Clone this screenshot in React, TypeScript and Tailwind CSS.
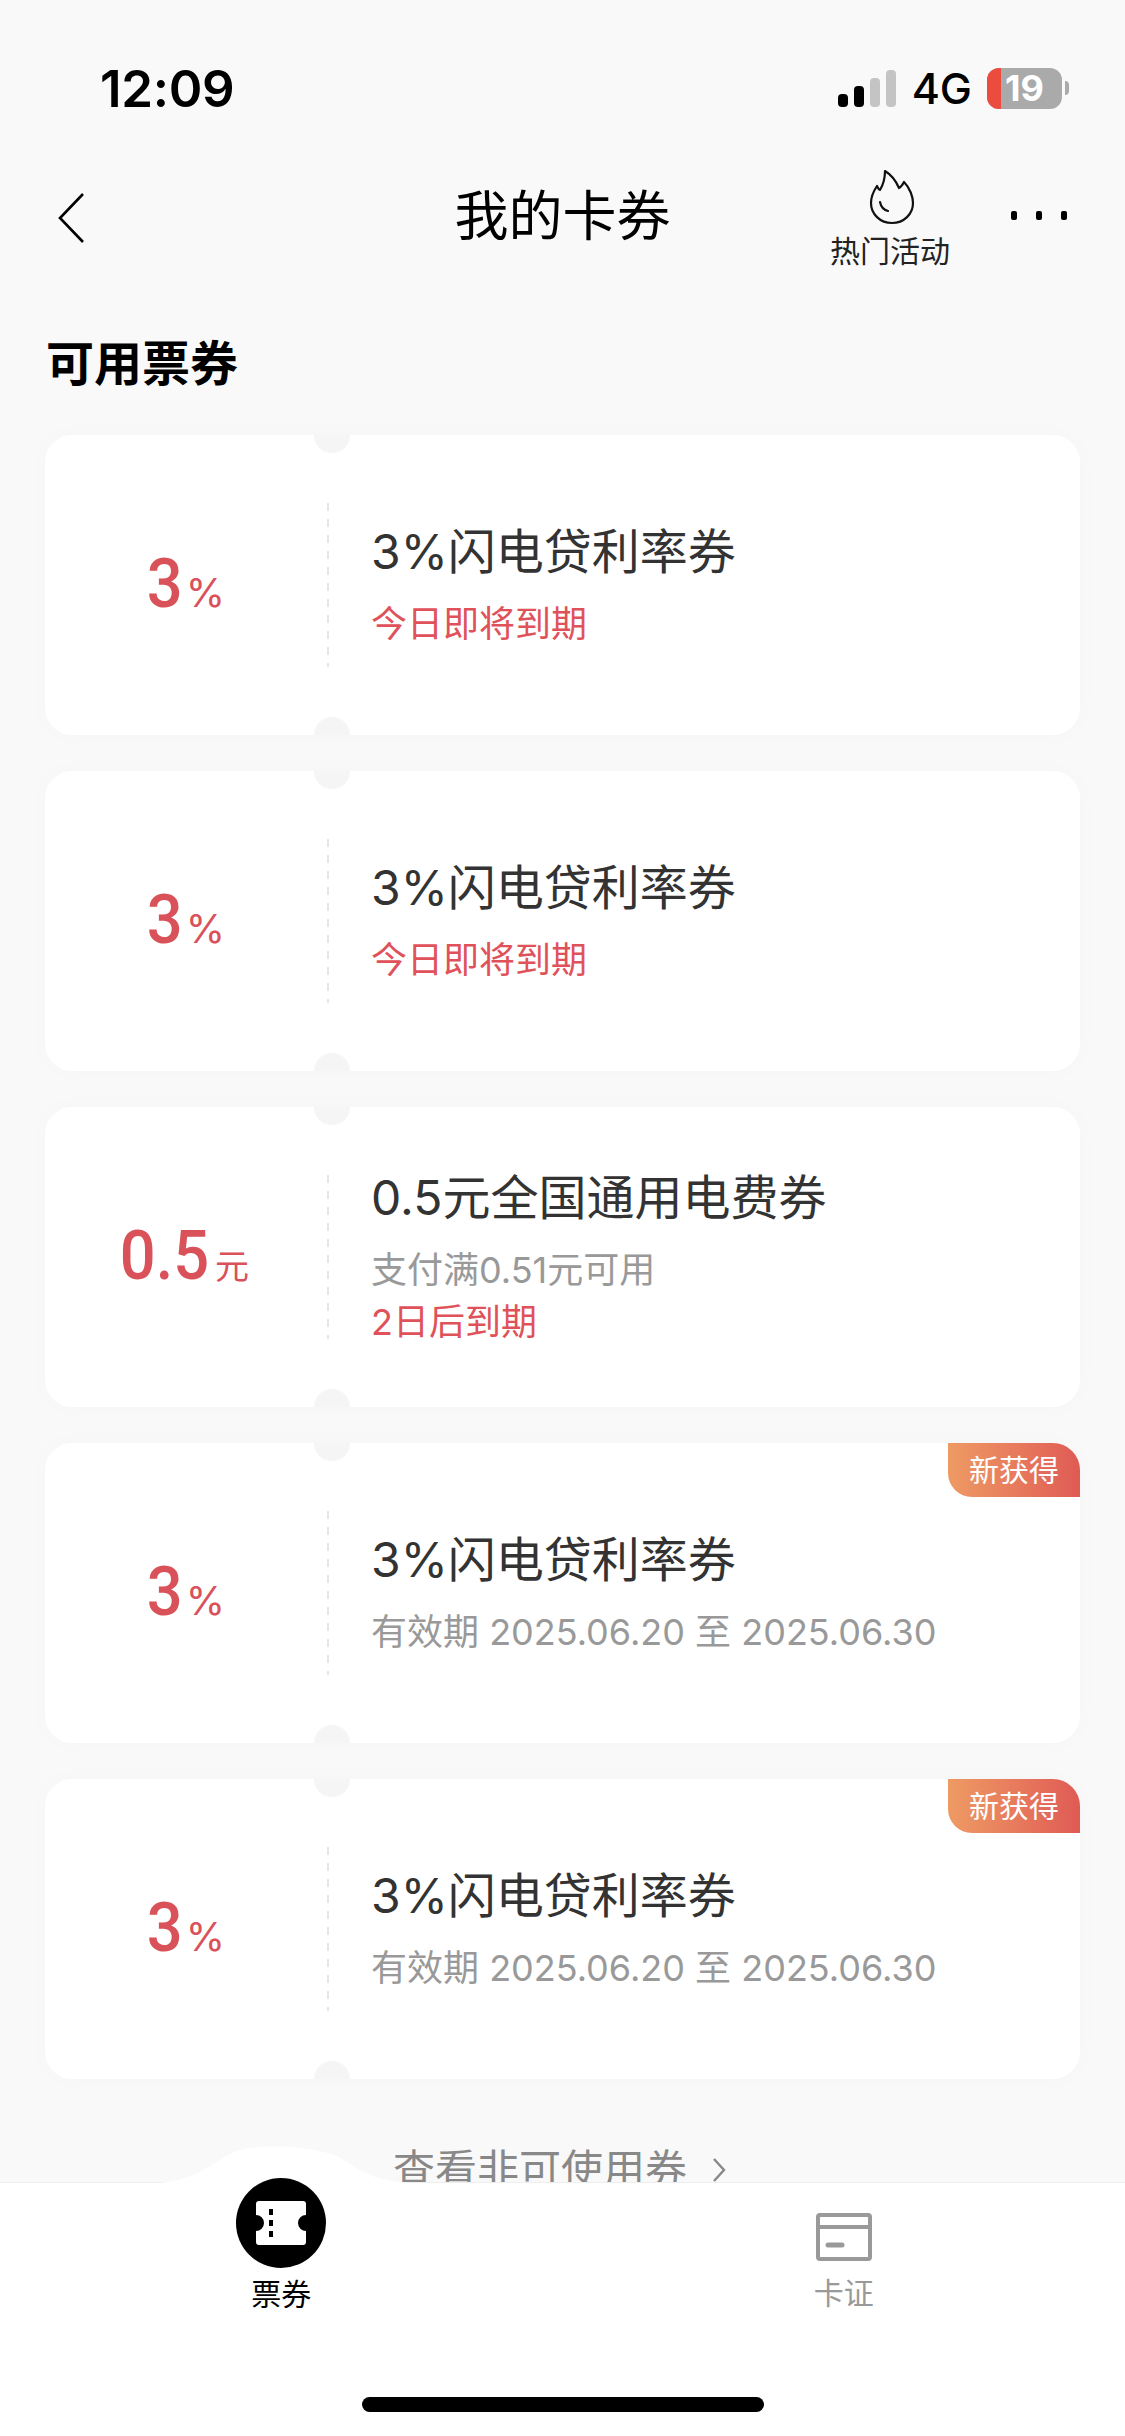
const FONT = "font-['Inter','Noto_Sans_CJK_SC',sans-serif]";

type Coupon = { value: string; unit: string; title: string; lines: { text: string; red?: boolean }[]; isNew?: boolean };

const coupons: Coupon[] = [
  { value: "3", unit: "%", title: "3%闪电贷利率券", lines: [{ text: "今日即将到期", red: true }] },
  { value: "3", unit: "%", title: "3%闪电贷利率券", lines: [{ text: "今日即将到期", red: true }] },
  { value: "0.5", unit: "元", title: "0.5元全国通用电费券", lines: [{ text: "支付满0.51元可用" }, { text: "2日后到期", red: true }] },
  { value: "3", unit: "%", title: "3%闪电贷利率券", lines: [{ text: "有效期 2025.06.20 至 2025.06.30" }], isNew: true },
  { value: "3", unit: "%", title: "3%闪电贷利率券", lines: [{ text: "有效期 2025.06.20 至 2025.06.30" }], isNew: true },
];

function CouponCard({ c }: { c: Coupon }) {
  const isPercent = c.unit === "%";
  return (
    <div className="relative flex h-[300px] overflow-hidden rounded-[27px] bg-white shadow-[0_0_24px_rgba(0,0,0,0.02)]">
      <div className="absolute left-[269px] top-[-18px] h-[36px] w-[36px] rounded-full bg-[#f5f5f5]" />
      <div className="absolute bottom-[-18px] left-[269px] h-[36px] w-[36px] rounded-full bg-[#f5f5f5]" />
      <div className={`flex w-[282px] items-baseline justify-center pt-[116px] ${isPercent ? "pr-[3px]" : "pr-[10px]"}`}>
        <span className="origin-right scale-x-[0.93] font-['Roboto'] text-[68px] leading-[66px] font-medium text-[#d9525a]">{c.value}</span>
        <span className={`leading-[34px] text-[#d9525a] ${isPercent ? "ml-[3px] text-[40px]" : "ml-[6px] text-[34px]"}`}>{c.unit}</span>
      </div>
      <div className="my-[68px] w-[2px] bg-[repeating-linear-gradient(to_bottom,#e6e6e6_0,#e6e6e6_8px,transparent_8px,transparent_16px)]" />
      <div className="flex flex-1 flex-col justify-center pb-[3px] pl-[42px]">
        <div className="mb-[12px] text-[48px] leading-[68px] text-[#333333]">{c.title}</div>
        {c.lines.map((l, i) => (
          <div key={i} className={`text-[36px] leading-[52px] ${l.red ? "text-[#e0525a]" : "text-[#999999]"}`}>
            {l.text}
          </div>
        ))}
      </div>
      {c.isNew && (
        <div className="absolute right-0 top-0 flex h-[54px] w-[132px] items-center justify-center rounded-bl-[24px] bg-gradient-to-r from-[#ee9a64] to-[#df5a55] text-[30px] leading-none text-white">
          新获得
        </div>
      )}
    </div>
  );
}

export default function App() {
  return (
    <div className={`${FONT} flex h-[2436px] w-[1125px] flex-col overflow-hidden bg-[#f9f9f9]`}>
      <main className="relative min-h-0 flex-1 overflow-hidden">
        {/* status bar */}
        <div className="flex h-[130px] items-center justify-between pt-[46px] pr-[56px] pl-[100px]">
          <span className="text-[51px] leading-none font-semibold tracking-[-0.3px] text-black">12:09</span>
          <div className="flex items-center">
            <div className="flex items-end gap-[6px]">
              <div className="h-[13px] w-[10px] rounded-[4px] bg-black" />
              <div className="h-[21px] w-[10px] rounded-[4px] bg-black" />
              <div className="h-[29px] w-[10px] rounded-[4px] bg-[#c4c4c4]" />
              <div className="h-[37px] w-[10px] rounded-[4px] bg-[#c4c4c4]" />
            </div>
            <span className="ml-[16px] text-[43px] leading-none font-medium text-black">4G</span>
            <div className="relative ml-[15px] flex h-[41px] w-[75px] items-center justify-center rounded-[12px] bg-[#aaaaaa]">
              <div className="absolute top-0 bottom-0 left-0 w-[14px] rounded-l-[12px] bg-[#ec4c3e]" />
              <span className="relative text-[36px] leading-[41px] font-bold text-white">19</span>
            </div>
            <div className="ml-[3px] h-[14px] w-[4px] rounded-r-full bg-[#aaaaaa]" />
          </div>
        </div>

        {/* nav */}
        <div className="relative flex h-[174px] items-center justify-center">
          <svg className="absolute top-[62px] left-[57px]" width="30" height="52" viewBox="0 0 30 52" fill="none">
            <path d="M26 2 3 26l23 24" stroke="#000" strokeWidth="2.6" />
          </svg>
          <span className="text-[54px] leading-none text-black">我的卡券</span>
          <div className="absolute top-[39px] left-[820px] flex w-[140px] flex-col items-center">
            <svg className="ml-[3px]" width="46" height="56" viewBox="0 0 46 56" fill="none" stroke="#111" strokeWidth="2.2" strokeLinejoin="round" strokeLinecap="round">
              <path d="M16 2c5 3 11 10 14 17 2-1 4-4 5-6 6 6 9 15 9 21 0 11-9 20-21 20S2 45 2 34c0-6 2-11 6-17 1 2 2 4 3 4 3-5 5-12 5-19Z" />
              <path d="M11 33c1 5 4 8 8 9" />
            </svg>
            <span className="mt-[8px] text-[30px] leading-[36px] text-[#222222]">热门活动</span>
          </div>
          <div className="absolute top-[81px] left-[1011px] flex gap-[19px]">
            <div className="h-[9px] w-[6px] rounded-[2px] bg-black" />
            <div className="h-[9px] w-[6px] rounded-[2px] bg-black" />
            <div className="h-[9px] w-[6px] rounded-[2px] bg-black" />
          </div>
        </div>

        {/* list */}
        <h2 className="mb-[13px] h-[118px] pl-[46px] text-[48px] leading-[120px] font-semibold text-black">可用票券</h2>
        <div className="mx-[45px] flex flex-col gap-[36px]">
          {coupons.map((c, i) => (
            <CouponCard key={i} c={c} />
          ))}
        </div>
        <div className="mt-[66px] flex items-center justify-center pr-[6px] text-[42px] leading-[50px] text-[#888888]">
          <span>查看非可使用券</span>
          <svg className="ml-[25px]" width="14" height="26" viewBox="0 0 14 26" fill="none">
            <path d="M2 2l10 11L2 24" stroke="#888" strokeWidth="2.4" />
          </svg>
        </div>
      </main>

      {/* tab bar */}
      <nav className="relative h-[254px] shrink-0 border-t border-[#eeeeee] bg-white">
        <svg className="absolute top-[-37px] left-[160px]" width="250" height="38" viewBox="0 0 250 38" fill="none">
          <path d="M0 38V37C15 36 28 31 40 26 55 18 68 6 85 3 100 0 125 0 142 2 155 4 165 6 175 9 185 14 195 23 210 29 220 33 235 36 250 37V38Z" fill="#fff" />
        </svg>
        <div className="grid grid-cols-2">
          <div className="relative flex flex-col items-center">
            <div className="-mt-[5px] flex h-[90px] w-[90px] items-center justify-center rounded-full bg-black">
              <svg width="50" height="44" viewBox="0 0 50 44">
                <path d="M3 0h44a3 3 0 0 1 3 3v11a8 8 0 0 0 0 16v11a3 3 0 0 1-3 3H3a3 3 0 0 1-3-3V30a8 8 0 0 0 0-16V3a3 3 0 0 1 3-3Z" fill="#fff" />
                <path d="M15 8v6M15 19v6M15 30v6" stroke="#000" strokeWidth="4" />
              </svg>
            </div>
            <span className="mt-[8px] text-[30px] leading-[36px] text-black">票券</span>
          </div>
          <div className="flex flex-col items-center pt-[30px]">
            <svg width="56" height="48" viewBox="0 0 56 48" fill="none">
              <rect x="2" y="2" width="52" height="44" rx="2" stroke="#999" strokeWidth="4" />
              <path d="M2 14h52" stroke="#999" strokeWidth="4" />
              <path d="M12 32h14" stroke="#999" strokeWidth="5" strokeLinecap="round" />
            </svg>
            <span className="mt-[14px] text-[30px] leading-[36px] text-[#999999]">卡证</span>
          </div>
        </div>
        <div className="absolute top-[214px] left-[362px] h-[15px] w-[402px] rounded-full bg-black" />
      </nav>
    </div>
  );
}
